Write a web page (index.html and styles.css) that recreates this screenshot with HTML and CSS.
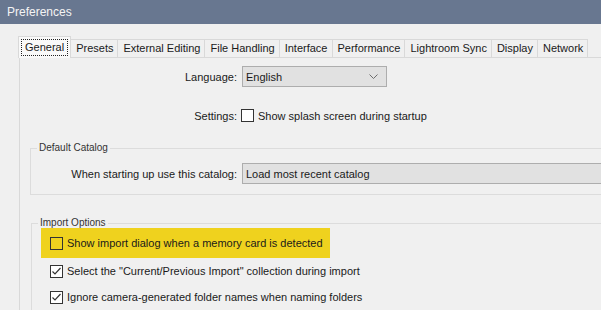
FILE: index.html
```html
<!DOCTYPE html>
<html lang="en">
<head>
    <meta charset="UTF-8">
    <title>Preferences</title>
    <link rel="stylesheet" href="styles.css">
</head>
<body>
    <div class="titlebar">Preferences</div>

    <div class="dialog">
        <div class="tabs">
            <div class="tab active"><span class="focus">General</span></div>
            <div class="tab">Presets</div>
            <div class="tab">External Editing</div>
            <div class="tab">File Handling</div>
            <div class="tab">Interface</div>
            <div class="tab">Performance</div>
            <div class="tab">Lightroom Sync</div>
            <div class="tab">Display</div>
            <div class="tab">Network</div>
        </div>

        <div class="panel">
            <div class="row">
                <span class="label">Language:</span>
                <div class="combo combo-short">
                    <span>English</span>
                    <svg class="chevron" width="9" height="5" viewBox="0 0 9 5">
                        <polyline points="0.5,0.5 4.5,4.5 8.5,0.5" fill="none" stroke="#6d6d6d" stroke-width="1"/>
                    </svg>
                </div>
            </div>

            <div class="row settings">
                <span class="label">Settings:</span>
                <span class="check"></span>
                <span>Show splash screen during startup</span>
            </div>

            <fieldset class="group catalog">
                <legend>Default Catalog</legend>
                <div class="row">
                    <span class="label label-catalog">When starting up use this catalog:</span>
                    <div class="combo combo-wide"><span>Load most recent catalog</span></div>
                </div>
            </fieldset>

            <fieldset class="group import">
                <legend>Import Options</legend>
                <div class="options">
                    <div class="option highlight">
                        <span class="check clear"></span>
                        <span>Show import dialog when a memory card is detected</span>
                    </div>
                    <div class="option">
                        <span class="check">
                            <svg width="11" height="11" viewBox="0 0 11 11"><polyline points="1.5,5.5 4,8 9.5,2" fill="none" stroke="#333" stroke-width="1.2"/></svg>
                        </span>
                        <span>Select the "Current/Previous Import" collection during import</span>
                    </div>
                    <div class="option">
                        <span class="check">
                            <svg width="11" height="11" viewBox="0 0 11 11"><polyline points="1.5,5.5 4,8 9.5,2" fill="none" stroke="#333" stroke-width="1.2"/></svg>
                        </span>
                        <span>Ignore camera-generated folder names when naming folders</span>
                    </div>
                </div>
            </fieldset>
        </div>
    </div>
</body>
</html>
```

FILE: styles.css
```css
html, body {
    margin: 0;
    width: 601px;
    height: 310px;
    overflow: hidden;
}
body {
    font-family: "Liberation Sans", Arial, sans-serif;
    font-size: 11px;
    color: #1a1a1a;
    background-color: #f0f0f0;
}
.titlebar {
    height: 24px;
    line-height: 24px;
    padding-left: 7px;
    background-color: #687790;
    color: #f4f4f4;
    font-size: 12px;
}
.dialog {
    padding: 12px 0 0 18px;
}
.tabs {
    display: flex;
    align-items: flex-end;
    height: 21px;
    white-space: nowrap;
}
.tab {
    height: 18px;
    line-height: 17px;
    padding: 0 4px 0 5px;
    box-sizing: border-box;
    border: 1px solid #d9d9d9;
    border-bottom: none;
    margin-left: -1px;
    background-color: #f0f0f0;
}
.tab.active {
    height: 22px;
    margin: 0 0 -1px 0;
    padding: 2px 2px 0 2px;
    background-color: #f9f9f9;
    position: relative;
    z-index: 1;
}
.focus {
    display: block;
    padding: 0 3px;
    line-height: 15px;
    border: 1px dotted #222;
}
.panel {
    width: 640px;
    margin-left: 1px;
    border-left: 1px solid #d9d9d9;
    border-top: 1px solid #d9d9d9;
    padding: 8px 0 0 10px;
}
.row {
    display: flex;
    align-items: center;
    white-space: nowrap;
}
.label {
    width: 207px;
    text-align: right;
    margin-right: 5px;
    flex-shrink: 0;
}
.label-catalog {
    width: 206px;
}
.settings {
    margin-top: 21px;
    height: 15px;
}
.settings .label {
    margin-right: 4px;
}
.combo {
    height: 21px;
    box-sizing: border-box;
    border: 1px solid #adadad;
    background-color: #e1e1e1;
    padding: 0 3px;
    display: flex;
    align-items: center;
    justify-content: space-between;
}
.combo-short {
    width: 145px;
}
.combo-short .chevron {
    margin-right: 5px;
}
.combo-wide {
    width: 420px;
}
.check {
    width: 13px;
    height: 13px;
    box-sizing: border-box;
    border: 1px solid #333;
    background-color: #fff;
    margin-right: 4px;
    flex-shrink: 0;
    display: flex;
    align-items: center;
    justify-content: center;
}
.check.clear {
    background-color: transparent;
}
.group {
    margin: 0;
    padding: 0;
    border: 1px solid #dcdcdc;
    border-right: none;
}
.group legend {
    margin-left: 6px;
    padding: 0 2px;
    font-size: 10px;
    line-height: 10px;
    color: #333;
}
.catalog {
    margin-top: 20px;
}
.catalog .row {
    margin-top: 10px;
    margin-bottom: 10px;
}
.import {
    margin: 23px 0 0 1px;
}
.options {
    padding-left: 9px;
}
.option {
    display: flex;
    align-items: center;
    height: 26px;
    padding-left: 9px;
    white-space: nowrap;
}
.option.highlight {
    width: 289px;
    height: 30px;
    box-sizing: border-box;
    background-color: #efd21e;
}
```
